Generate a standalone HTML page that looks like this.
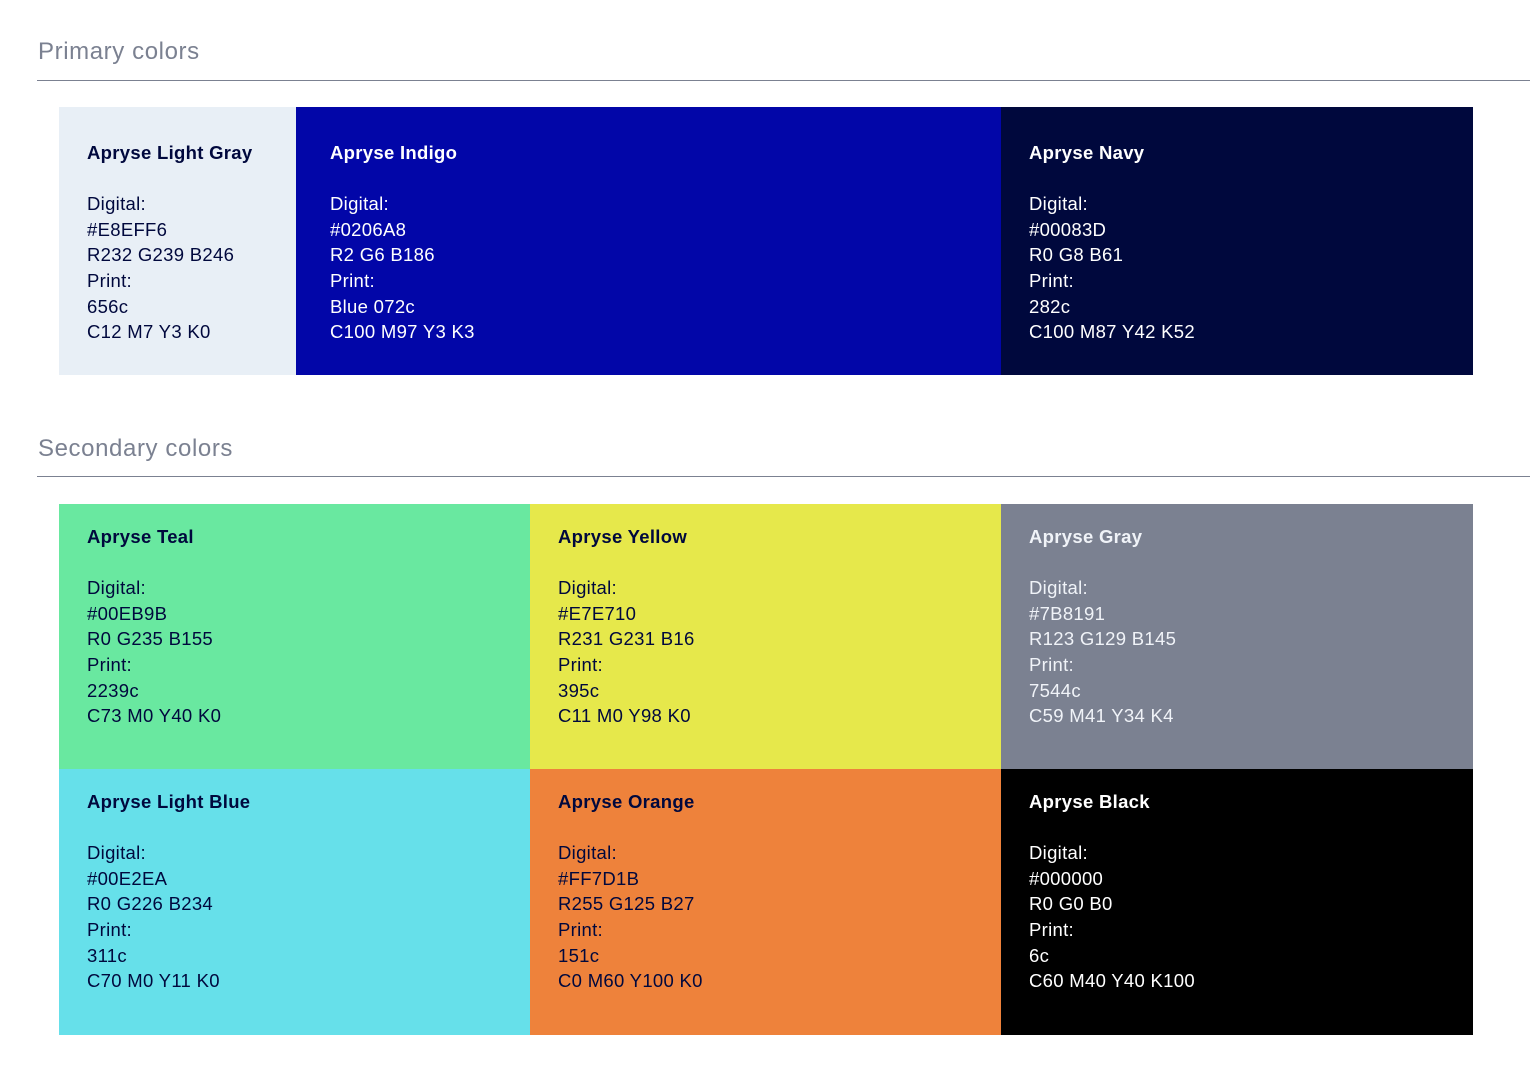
<!DOCTYPE html>
<html><head><meta charset="utf-8"><style>
body{margin:0;width:1530px;height:1076px;background:#fff;font-family:"Liberation Sans",sans-serif;position:relative;overflow:hidden}
.h{position:absolute;left:38px;font-size:24px;color:#7B8191;line-height:30px;letter-spacing:0.6px}
.rule{position:absolute;left:37px;width:1493px;height:1px;background:#7B8191}
.c{position:absolute;box-sizing:border-box;padding:33px 0 0 28px;font-size:18.5px;line-height:25.6px;color:#00083D;letter-spacing:0.3px}
.c b{display:block;margin-bottom:25.6px}
.w{color:#fff}.g{color:#F0F3F8}
</style></head><body>
<div class="h" style="top:37px">Primary colors</div>
<div class="rule" style="top:80px"></div>
<div class="c" style="left:59px;top:107px;width:237px;height:268px;background:#E8EFF6"><b>Apryse Light Gray</b>Digital:<br>#E8EFF6<br>R232 G239 B246<br>Print:<br>656c<br>C12 M7 Y3 K0</div>
<div class="c w" style="left:296px;top:107px;width:705px;height:268px;background:#0206A8;padding-left:34px"><b>Apryse Indigo</b>Digital:<br>#0206A8<br>R2 G6 B186<br>Print:<br>Blue 072c<br>C100 M97 Y3 K3</div>
<div class="c w" style="left:1001px;top:107px;width:472px;height:268px;background:#00083D"><b>Apryse Navy</b>Digital:<br>#00083D<br>R0 G8 B61<br>Print:<br>282c<br>C100 M87 Y42 K52</div>
<div class="h" style="top:434px">Secondary colors</div>
<div class="rule" style="top:476px"></div>
<div class="c" style="left:59px;top:504px;width:471px;height:265px;background:#69E8A0;padding-top:20px"><b>Apryse Teal</b>Digital:<br>#00EB9B<br>R0 G235 B155<br>Print:<br>2239c<br>C73 M0 Y40 K0</div>
<div class="c" style="left:530px;top:504px;width:471px;height:265px;background:#E6E84B;padding-top:20px"><b>Apryse Yellow</b>Digital:<br>#E7E710<br>R231 G231 B16<br>Print:<br>395c<br>C11 M0 Y98 K0</div>
<div class="c g" style="left:1001px;top:504px;width:472px;height:265px;background:#7B8191;padding-top:20px"><b>Apryse Gray</b>Digital:<br>#7B8191<br>R123 G129 B145<br>Print:<br>7544c<br>C59 M41 Y34 K4</div>
<div class="c" style="left:59px;top:769px;width:471px;height:266px;background:#66E0EA;padding-top:20px"><b>Apryse Light Blue</b>Digital:<br>#00E2EA<br>R0 G226 B234<br>Print:<br>311c<br>C70 M0 Y11 K0</div>
<div class="c" style="left:530px;top:769px;width:471px;height:266px;background:#EE823B;padding-top:20px"><b>Apryse Orange</b>Digital:<br>#FF7D1B<br>R255 G125 B27<br>Print:<br>151c<br>C0 M60 Y100 K0</div>
<div class="c w" style="left:1001px;top:769px;width:472px;height:266px;background:#000;padding-top:20px"><b>Apryse Black</b>Digital:<br>#000000<br>R0 G0 B0<br>Print:<br>6c<br>C60 M40 Y40 K100</div>
</body></html>
